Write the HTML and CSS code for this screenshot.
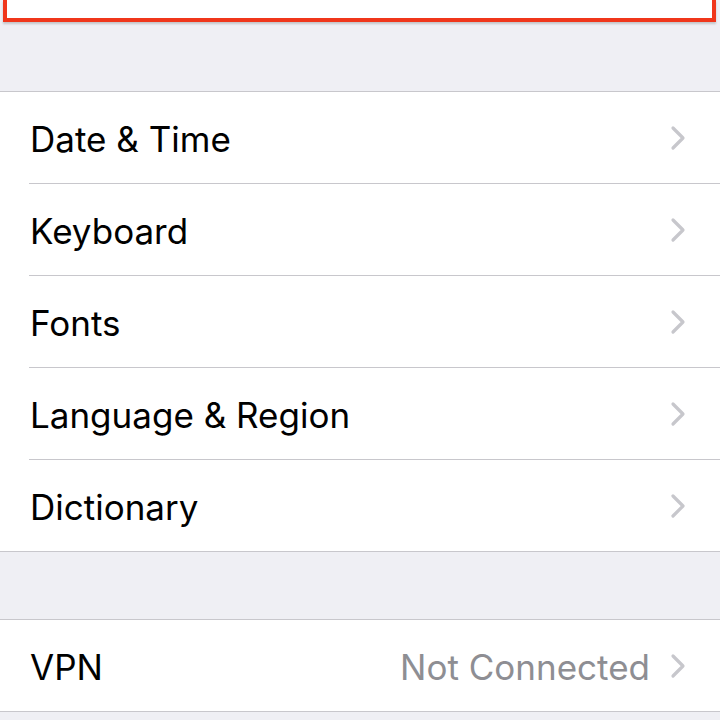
FILE: index.html
```html
<!DOCTYPE html>
<html>
<head>
<meta charset="utf-8">
<link rel="stylesheet" href="styles.css">
</head>
<body>
<div class="highlight"></div>
<div class="group group-first">
  <div class="row"><span class="label">Date &amp; Time</span><span class="chev"><svg viewBox="0 0 16 26" width="16" height="26"><path d="M3 3 L13 13 L3 23" fill="none" stroke="#c7c7cc" stroke-width="3.2" stroke-linecap="round" stroke-linejoin="round"/></svg></span></div>
  <div class="row"><span class="label">Keyboard</span><span class="chev"><svg viewBox="0 0 16 26" width="16" height="26"><path d="M3 3 L13 13 L3 23" fill="none" stroke="#c7c7cc" stroke-width="3.2" stroke-linecap="round" stroke-linejoin="round"/></svg></span></div>
  <div class="row"><span class="label">Fonts</span><span class="chev"><svg viewBox="0 0 16 26" width="16" height="26"><path d="M3 3 L13 13 L3 23" fill="none" stroke="#c7c7cc" stroke-width="3.2" stroke-linecap="round" stroke-linejoin="round"/></svg></span></div>
  <div class="row"><span class="label">Language &amp; Region</span><span class="chev"><svg viewBox="0 0 16 26" width="16" height="26"><path d="M3 3 L13 13 L3 23" fill="none" stroke="#c7c7cc" stroke-width="3.2" stroke-linecap="round" stroke-linejoin="round"/></svg></span></div>
  <div class="row"><span class="label">Dictionary</span><span class="chev"><svg viewBox="0 0 16 26" width="16" height="26"><path d="M3 3 L13 13 L3 23" fill="none" stroke="#c7c7cc" stroke-width="3.2" stroke-linecap="round" stroke-linejoin="round"/></svg></span></div>
</div>
<div class="group group-second">
  <div class="row"><span class="label">VPN</span><span class="value">Not Connected</span><span class="chev"><svg viewBox="0 0 16 26" width="16" height="26"><path d="M3 3 L13 13 L3 23" fill="none" stroke="#c7c7cc" stroke-width="3.2" stroke-linecap="round" stroke-linejoin="round"/></svg></span></div>
</div>
</body>
</html>
```
FILE: styles.css
```css
html, body {
  margin: 0;
  padding: 0;
  background: #efeff4;
  height: 720px;
  overflow: hidden;
  font-family: Inter, "Liberation Sans", sans-serif;
}
.highlight {
  height: 18px;
  margin: 0 4px 0 3px;
  background: #fff;
  border: 4px solid #f0361b;
  border-top: none;
  box-shadow: 0 2px 2px rgba(0,0,0,0.18);
}
.group {
  background: #fff;
  border-top: 1px solid #c8c7cc;
  border-bottom: 1px solid #c8c7cc;
}
.group-first { margin-top: 69px; }
.group-second { margin-top: 67px; }
.row {
  display: flex;
  align-items: center;
  height: 91px;
  margin-left: 29px;
  padding-right: 34px;
  border-bottom: 1px solid #c8c7cc;
}
.row:last-child { border-bottom: none; height: 91px; }
.label {
  flex: 1;
  font-size: 35px;
  color: #000;
  padding-left: 1px;
  padding-top: 2px;
}
.value {
  font-size: 35px;
  color: #8e8e93;
  margin-right: 20px;
  padding-top: 2px;
}
.chev { display: flex; }
```
